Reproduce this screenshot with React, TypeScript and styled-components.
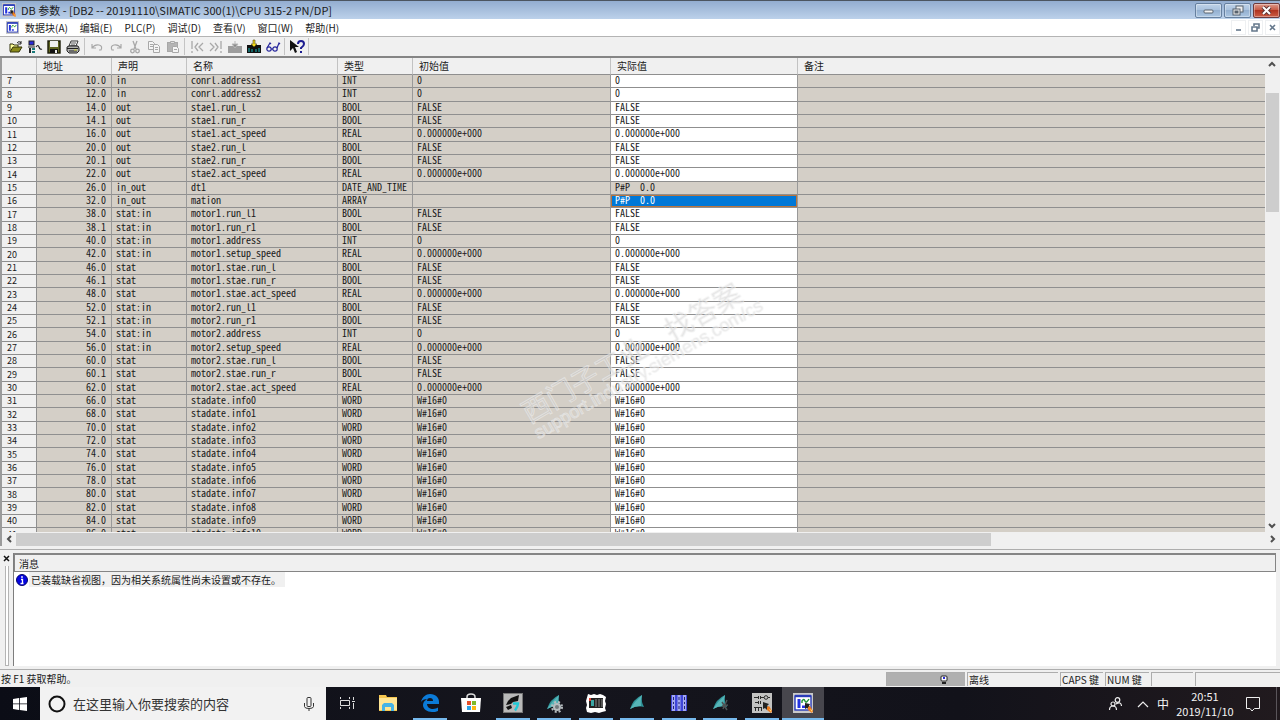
import React from "react";
import styled, { createGlobalStyle } from "styled-components";

const uiFont = `"Noto Sans CJK SC", "Noto Sans", sans-serif`;
const gridFont = `"Noto Sans Mono CJK SC", "Liberation Mono", "Noto Sans CJK SC", monospace`;

const GlobalStyle = createGlobalStyle`
  * { box-sizing: border-box; }
  body { margin: 0; background: #f0f0f0; color: #1a1a1a; font: 10px/14px ${uiFont}; }
  button { padding: 0; border: 0; background: none; color: inherit; font: inherit; }
  svg { display: block; }
`;

const Window = styled.div`
  display: flex;
  flex-direction: column;
  height: 100vh;
  overflow: hidden;
`;

const TitleBar = styled.header`
  display: flex;
  align-items: center;
  height: 19px;
  flex: none;
  padding: 0 0 0 2px;
  border-top: 1px solid #4c5560;
  background: linear-gradient(#93add0, #bcd1ea);
`;

const Title = styled.h1`
  flex: 1;
  margin: 0 0 0 5px;
  font-size: 11px;
  font-weight: 400;
  line-height: 16px;
  white-space: nowrap;
`;

const WindowButtons = styled.div`
  display: flex;
  align-items: center;
  gap: 2px;
`;

const FrameButton = styled.button<{ $close?: boolean }>`
  display: grid;
  place-items: center;
  width: 27px;
  height: 15px;
  border: 1px solid ${(p) => (p.$close ? "#6d3a3c" : "#66809f")};
  border-radius: 2px;
  background: ${(p) =>
    p.$close
      ? "linear-gradient(#dc9a8c, #c75a45 45%, #b03420 50%, #cc5d45)"
      : "linear-gradient(#bfd2e8, #a9c2de 45%, #94b0d0 50%, #abc6e2)"};
  box-shadow: inset 0 0 0 1px rgba(255, 255, 255, 0.35);
`;

const MenuBar = styled.nav`
  display: flex;
  align-items: center;
  height: 18px;
  flex: none;
  padding-left: 6px;
  border-bottom: 1px solid #b4b4b4;
  background: #fff;
`;

const MenuList = styled.div`
  display: flex;
  flex: 1;
  gap: 12px;
  margin-left: 6px;
`;

const MenuButton = styled.button`
  line-height: 14px;
  white-space: nowrap;
`;

const MdiButtons = styled.div`
  display: flex;
  gap: 2px;
`;

const MdiButton = styled.button`
  display: grid;
  place-items: center;
  width: 15px;
  height: 15px;
  border: 1px solid #eef0f2;
`;

const ToolBar = styled.div`
  display: flex;
  align-items: center;
  height: 21px;
  flex: none;
  padding-left: 6px;
  border-bottom: 2px solid #858585;
  background: #f0f0f0;
`;

const ToolButton = styled.button`
  display: grid;
  place-items: center;
  width: 19px;
  height: 18px;
`;

const Separator = styled.span`
  width: 1px;
  height: 17px;
  margin: 0 2px;
  background: #c4c4c4;
`;

const GridPane = styled.main`
  position: relative;
  display: grid;
  grid-template: minmax(0, 1fr) 14px / minmax(0, 1fr) 15px;
  flex: 1;
  min-height: 0;
  border-left: 2px solid #9b9b9b;
`;

const TableView = styled.div`
  min-height: 0;
  overflow: hidden;
  background: #d4cfc7;
`;

const Table = styled.table`
  width: 100%;
  table-layout: fixed;
  border-collapse: separate;
  border-spacing: 0;
`;

const HeadCell = styled.th`
  height: 17px;
  padding: 0 0 0 6px;
  border-right: 1px solid #c2c2c2;
  border-bottom: 1px solid #8f8f8f;
  background: #f0f0f0;
  font-weight: 400;
  line-height: 16px;
  text-align: left;

  &:last-child { border-right: 0; }
`;

const Row = styled.tr`
  height: 13px;

  &:nth-child(3n + 2) { height: 14px; }
`;

const RowNumber = styled.th`
  padding: 0 0 0 5px;
  border-right: 1px solid #8f8f8f;
  border-bottom: 1px solid #8f8f8f;
  background: #f0f0f0;
  font-size: 9px;
  font-weight: 400;
  line-height: 12px;
  text-align: left;
  vertical-align: bottom;
`;

const Cell = styled.td<{ $tone?: "plain" | "edit" | "active"; $right?: boolean }>`
  padding: 0 5px 0 4px;
  border-right: 1px solid #999;
  border-bottom: 1px solid #8f8f8f;
  background: ${(p) => (p.$tone === "active" ? "#0078d7" : p.$tone === "edit" ? "#fff" : "#d4cfc7")};
  color: ${(p) => (p.$tone === "active" ? "#fff" : "#1a1a1a")};
  box-shadow: ${(p) => (p.$tone === "active" ? "inset 0 0 0 1px #b8753f" : "none")};
  font-family: ${gridFont};
  line-height: 10px;
  text-align: ${(p) => (p.$right ? "right" : "left")};
  vertical-align: top;
  white-space: pre;

  &:last-child { border-right: 0; }
`;

const VerticalBar = styled.div`
  display: flex;
  flex-direction: column;
  align-items: stretch;
  padding: 0 1px;
  background: #f0f0f0;
`;

const HorizontalBar = styled.div`
  display: flex;
  grid-column: 1 / -1;
  padding: 1px 1px 0;
  background: #f0f0f0;
`;

const ScrollButton = styled.button`
  display: grid;
  place-items: center;
  flex: none;
  width: 13px;
  height: 13px;
`;

const Track = styled.div<{ $vertical?: boolean }>`
  display: flex;
  flex: 1;
  flex-direction: ${(p) => (p.$vertical ? "column" : "row")};
  padding: ${(p) => (p.$vertical ? "22px 0 0" : "0")};
`;

const Thumb = styled.div<{ $share: number }>`
  flex: 0 0 ${(p) => p.$share}%;
  background: #cdcdcd;
`;

const Watermark = styled.div`
  position: absolute;
  left: 50%;
  top: 61%;
  translate: -50% -50%;
  rotate: -30deg;
  color: rgba(255, 255, 255, 0.2);
  -webkit-text-stroke: 1px rgba(246, 246, 246, 0.5);
  text-shadow: 0 0 1px rgba(170, 170, 170, 0.4);
  white-space: pre;
  pointer-events: none;
`;

const WatermarkName = styled.div`
  display: flex;
  gap: 24px;
  font-size: 28px;
  line-height: 30px;
`;

const WatermarkUrl = styled.div`
  font: 18px/18px "Liberation Sans", sans-serif;
`;

const MessagePane = styled.section`
  display: flex;
  height: 121px;
  flex: none;
  margin-top: 3px;
  padding: 3px 4px 3px 0;
  border-top: 1px solid #adadad;
  border-bottom: 1px solid #adadad;
`;

const DockHandle = styled.div`
  display: flex;
  flex-direction: column;
  align-items: center;
  width: 13px;
  gap: 4px;
  padding-top: 2px;
`;

const Grip = styled.div`
  flex: 1;
  width: 4px;
  border: 1px solid #b4b4b4;
  border-top: 0;
  background: #fff;
`;

const MessageBox = styled.div`
  flex: 1;
  border-left: 1px solid #7d7d7d;
  background: #fff;
`;

const MessageHead = styled.h2`
  height: 19px;
  margin: 0;
  padding-left: 4px;
  border: 1px solid #858585;
  border-top-width: 2px;
  background: #f0f0f0;
  font-size: 10px;
  font-weight: 400;
  line-height: 17px;
`;

const MessageRow = styled.p`
  display: flex;
  align-items: center;
  gap: 1px;
  margin: 0;
  padding-left: 2px;
`;

const MessageText = styled.span`
  padding: 0 4px 0 2px;
  background: #f0f0f0;
  line-height: 15px;
`;

const StatusBar = styled.footer`
  display: flex;
  height: 17px;
  flex: none;
  gap: 2px;
  padding: 2px 0 1px 1px;
  line-height: 14px;
`;

const StatusHint = styled.span`
  flex: 1;
`;

const StatusCell = styled.span<{ $width: number; $busy?: boolean }>`
  display: flex;
  align-items: center;
  width: ${(p) => p.$width}px;
  padding-left: ${(p) => (p.$busy ? 52 : 1)}px;
  border: solid #adadad;
  border-width: 1px 0 0 1px;
  background: ${(p) => (p.$busy ? "#b0b0b0" : "#f0f0f0")};
  white-space: nowrap;
`;

const TaskBar = styled.div`
  display: flex;
  height: 33px;
  flex: none;
  background: linear-gradient(90deg, #0b0d16, #15151d 40%, #12121a 75%, #211a1e);
  color: #f4f4f4;
`;

const StartButton = styled.button`
  display: grid;
  place-items: center;
  width: 40px;
`;

const SearchBox = styled.label`
  display: flex;
  align-items: center;
  width: 286px;
  padding: 0 10px 0 8px;
  background: #f2f2f2;
`;

const SearchInput = styled.input`
  flex: 1;
  min-width: 0;
  padding: 0 0 0 7px;
  border: 0;
  outline: 0;
  background: none;
  font: 13px/20px ${uiFont};

  &::placeholder { color: #333; opacity: 1; }
`;

const TaskList = styled.div`
  display: flex;
  flex: 1;
`;

const TaskButton = styled.button<{ $open?: boolean; $active?: boolean }>`
  display: flex;
  flex-direction: column;
  align-items: center;
  justify-content: flex-end;
  width: 41px;
  gap: 5px;
  background: ${(p) => (p.$active ? "#47464d" : "none")};

  &:nth-child(even) { width: 42px; }

  &::after {
    content: "";
    width: ${(p) => (p.$active ? "100%" : "34px")};
    height: 2px;
    background: ${(p) => (p.$open ? "#76b9ed" : "transparent")};
  }
`;

const Tray = styled.div`
  display: flex;
  align-items: center;
  gap: 2px;
  padding-right: 3px;
`;

const Clock = styled.time`
  width: 68px;
  padding-right: 2px;
  font-size: 11px;
  line-height: 15px;
  text-align: center;
`;

const TrayButton = styled.button<{ $width: number }>`
  display: grid;
  place-items: center;
  width: ${(p) => p.$width}px;
  height: 33px;
  font-size: 12px;
`;

const DesktopEdge = styled.span`
  width: 1px;
  height: 33px;
  margin-left: 10px;
  background: #5a555a;
`;

const AppIcon = ({ size = 14, pointer = true }: { size?: number; pointer?: boolean }) => (
  <svg width={size} height={size} viewBox="0 0 20 20">
    <rect width="20" height="20" fill="#c9c9c9" />
    <rect x="2" y="3" width="16" height="14" fill="#fff" stroke="#2a3cb8" strokeWidth="1.4" />
    <path d="M2 3h16" stroke="#2a3cb8" strokeWidth="2.4" />
    <path d="M6 6v9M10.500 12.500v2.500" stroke="#2433e0" strokeWidth="3" />
    <path d="M9 10V8q2-3 3 0t4-2" fill="none" stroke="#1c9432" strokeWidth="1.4" />
    {pointer && (
      <>
        <path d="M12 10l5 1-1 2 2 2-2 2-2-2-2 1z" fill="#222" />
        <path d="M15 14l2-1 3 5-1 2-4-3z" fill="#ef7b1b" />
        <path d="M17 16l2 1v2z" fill="#ffe27a" />
      </>
    )}
  </svg>
);

const Tool = ({ children }: { children: React.ReactNode }) => (
  <svg width="16" height="16" viewBox="0 0 16 16" fill="none">
    {children}
  </svg>
);

const dim = "#a8a8a8";

const toolGroups: { label: string; icon: React.ReactNode }[][] = [
  [
    {
      label: "打开",
      icon: (
        <>
          <path d="M2 12V5h3l1 1h4v2" fill="#ffff9a" stroke="#33330a" />
          <path d="M2 13l3-5h9l-3 5z" fill="#8b8b1a" stroke="#33330a" />
          <path d="M9 4q2-3 4 0M13 2v3h-3" stroke="#222" />
        </>
      ),
    },
    {
      label: "在线",
      icon: (
        <>
          <rect x="2" y="2" width="5" height="4" fill="#2a2ad8" stroke="#222" />
          <path d="M1 8h7" stroke="#222" />
          <rect x="2" y="9" width="2" height="5" fill="#222" />
          <rect x="5" y="9" width="3" height="2" fill="#1a7a7a" />
          <rect x="5" y="12" width="3" height="2" fill="#1a7a7a" />
          <path d="M9 8q2-3 3 0t3 2" stroke="#222" strokeWidth="1.2" />
        </>
      ),
    },
    {
      label: "保存",
      icon: (
        <>
          <rect x="2" y="2" width="12" height="12" fill="#5f6420" stroke="#1c1c08" strokeWidth="1.4" />
          <rect x="4" y="2" width="8" height="6" fill="#efefef" />
          <rect x="4" y="10" width="8" height="4" fill="#111" />
          <rect x="9" y="11" width="2" height="3" fill="#eee" />
        </>
      ),
    },
    {
      label: "打印",
      icon: (
        <>
          <path d="M4 7l2-5h7l-2 5z" fill="#fff" stroke="#333" />
          <path d="M6 4h5M6 6h4" stroke="#555" />
          <path d="M2 8l2-1h9l1 2v3l-2 2H4l-2-2z" fill="#b0b0b0" stroke="#222" />
          <path d="M2 9.500h11M4 12h8" stroke="#222" />
          <path d="M9 11h3" stroke="#d8d83a" />
        </>
      ),
    },
  ],
  [
    { label: "撤消", icon: <path d="M3 5v4h4M3 9q3-4 7-3t2 5h-2" stroke={dim} strokeWidth="1.2" /> },
    { label: "重做", icon: <path d="M13 5v4H9M13 9q-3-4-7-3t-2 5h2" stroke={dim} strokeWidth="1.2" /> },
    {
      label: "剪切",
      icon: (
        <>
          <path d="M6 2l3 8M10 2L7 10" stroke={dim} strokeWidth="1.3" />
          <circle cx="5.500" cy="12" r="1.800" stroke={dim} strokeWidth="1.3" />
          <circle cx="10.500" cy="12" r="1.800" stroke={dim} strokeWidth="1.3" />
        </>
      ),
    },
    {
      label: "复制",
      icon: (
        <g stroke={dim}>
          <path d="M2.500 2.500h4l2 2v6h-6z" fill="#f5f5f5" />
          <path d="M4 5.500h3M4 7.500h3" />
          <path d="M7.500 5.500h4l2 2v6h-6z" fill="#f5f5f5" />
          <path d="M9 8.500h3M9 10.500h3" />
        </g>
      ),
    },
    {
      label: "粘贴",
      icon: (
        <g stroke={dim}>
          <rect x="2.500" y="3.500" width="10" height="9" fill="#b4b4b4" />
          <path d="M5.500 2.500h4v2h-4z" fill="#ddd" />
          <path d="M7.500 7.500h4l2 2v4h-6z" fill="#f5f5f5" />
          <path d="M9 10.500h3" />
        </g>
      ),
    },
  ],
  [
    { label: "上一个错误", icon: <path d="M3 2v8M3 12v2M9 4L6 8l3 4M14 4l-4 4 4 4" stroke={dim} strokeWidth="1.3" /> },
    { label: "下一个错误", icon: <path d="M13 2v8M13 12v2M2 4l4 4-4 4M7 4l3 4-3 4" stroke={dim} strokeWidth="1.3" /> },
    {
      label: "下载",
      icon: (
        <>
          <path d="M1 7h14v7H1z" fill="#9d9d9d" />
          <path d="M8 2v3M5 5h6L8 9z" fill="#8a8a8a" stroke="#b8b8b8" />
        </>
      ),
    },
    {
      label: "下载到 CPU",
      icon: (
        <>
          <path d="M1 6h14v8H1z" fill="#111" />
          <path d="M3 9v4M6 10v3M10 10v3M13 9v4" stroke="#16898b" strokeWidth="1.4" />
          <path d="M7 1h2v4h2L8 8 5 5h2z" fill="#f5dc22" stroke="#4d4508" strokeWidth=".6" />
        </>
      ),
    },
    {
      label: "监视",
      icon: (
        <g stroke="#26269c" strokeWidth="1.2">
          <circle cx="4" cy="10" r="2.200" />
          <circle cx="10" cy="10" r="2.200" />
          <path d="M2 9l3-5 1 1M12 9l2-5 1 1M6 10h2" />
        </g>
      ),
    },
  ],
  [
    {
      label: "帮助",
      icon: (
        <>
          <path d="M1 1v11l3-3 2 5 2-1-2-5h4z" fill="#111" />
          <path d="M9 5q0-3 3-3t3 3q0 2-3 4v1M12 12v2" stroke="#1c1c90" strokeWidth="2" />
        </>
      ),
    },
  ],
];

const menus = ["数据块(A)", "编辑(E)", "PLC(P)", "调试(D)", "查看(V)", "窗口(W)", "帮助(H)"];
const columns = [
  { label: "", width: 35 },
  { label: "地址", width: 75 },
  { label: "声明", width: 75 },
  { label: "名称", width: 151 },
  { label: "类型", width: 75 },
  { label: "初始值", width: 198 },
  { label: "实际值", width: 187 },
  { label: "备注", width: 0 },
];

const zeroByType: Record<string, string> = {
  INT: "0",
  BOOL: "FALSE",
  REAL: "0.000000e+000",
  WORD: "W#16#0",
};

const variables: [string, string, string, string][] = [
  ["10.0", "in", "conrl.address1", "INT"],
  ["12.0", "in", "conrl.address2", "INT"],
  ["14.0", "out", "stae1.run_l", "BOOL"],
  ["14.1", "out", "stae1.run_r", "BOOL"],
  ["16.0", "out", "stae1.act_speed", "REAL"],
  ["20.0", "out", "stae2.run_l", "BOOL"],
  ["20.1", "out", "stae2.run_r", "BOOL"],
  ["22.0", "out", "stae2.act_speed", "REAL"],
  ["26.0", "in_out", "dt1", "DATE_AND_TIME"],
  ["32.0", "in_out", "mation", "ARRAY"],
  ["38.0", "stat:in", "motor1.run_l1", "BOOL"],
  ["38.1", "stat:in", "motor1.run_r1", "BOOL"],
  ["40.0", "stat:in", "motor1.address", "INT"],
  ["42.0", "stat:in", "motor1.setup_speed", "REAL"],
  ["46.0", "stat", "motor1.stae.run_l", "BOOL"],
  ["46.1", "stat", "motor1.stae.run_r", "BOOL"],
  ["48.0", "stat", "motor1.stae.act_speed", "REAL"],
  ["52.0", "stat:in", "motor2.run_l1", "BOOL"],
  ["52.1", "stat:in", "motor2.run_r1", "BOOL"],
  ["54.0", "stat:in", "motor2.address", "INT"],
  ["56.0", "stat:in", "motor2.setup_speed", "REAL"],
  ["60.0", "stat", "motor2.stae.run_l", "BOOL"],
  ["60.1", "stat", "motor2.stae.run_r", "BOOL"],
  ["62.0", "stat", "motor2.stae.act_speed", "REAL"],
  ...Array.from({ length: 11 }, (_, i): [string, string, string, string] => [
    `${66 + i * 2}.0`,
    "stat",
    `stadate.info${i}`,
    "WORD",
  ]),
];

const Chevron = ({ d }: { d: string }) => (
  <svg width="9" height="9" viewBox="0 0 9 9" fill="none" stroke="#505050" strokeWidth="2">
    <path d={d} />
  </svg>
);

const Sail = ({ children }: { children?: React.ReactNode }) => (
  <svg width="20" height="20" viewBox="0 0 20 20">
    <path d="M3 16Q6 6 15 2q-1 7 2 12-8-2-14 2z" fill="#2f9298" />
    <path d="M3 16Q8 8 15 2q-2 6-1 11-6 0-11 3z" fill="#56b5b8" />
    {children}
  </svg>
);

const tasks: { label: string; open?: boolean; active?: boolean; icon: React.ReactNode }[] = [
  {
    label: "任务视图",
    icon: (
      <svg width="20" height="20" viewBox="0 0 20 20" fill="none" stroke="#dcdcdc">
        <path d="M3.500 4v2M12.500 4v2M3.500 14v2M12.500 14v2M16.500 4v3M16.500 10v6" />
        <path d="M3.500 7.500h9v5h-9zM15 8.500h3" />
      </svg>
    ),
  },
  {
    label: "文件资源管理器",
    icon: (
      <svg width="20" height="20" viewBox="0 0 20 20">
        <path d="M1 2h7l1 2h10v14H1z" fill="#f5c64f" />
        <path d="M1 5h18v12H1z" fill="#ffe594" />
        <path d="M4 18v-6l2-2h8l2 2v6h-3v-4H7v4z" fill="#45b3e6" />
      </svg>
    ),
  },
  {
    label: "Edge",
    open: true,
    icon: (
      <svg width="20" height="20" viewBox="0 0 20 20">
        <path
          d="M1 9C2 4 6 1 10 1c6 0 9 4 9 8v2H7c0 3 3 5 6 5 2 0 4-1 5-1.500v3.500c-2 1-4 1-6 1-5 0-9-3-9-7 0-3 2-5 5-6-4 0-6 1-7 3zm6-1h6c0-2-1-3-3-3s-3 1-3 3z"
          fill="#0b7bd8"
        />
      </svg>
    ),
  },
  {
    label: "应用商店",
    icon: (
      <svg width="20" height="20" viewBox="0 0 20 20">
        <path d="M6 6V4q0-3 4-3t4 3v2" fill="none" stroke="#ddd" strokeWidth="1.500" />
        <path d="M0 5h20l-1 14H1z" fill="#fff" />
        <path d="M6 8h4v4H6z" fill="#e8502a" />
        <path d="M11 8h4v4h-4z" fill="#80ba27" />
        <path d="M6 13h4v4H6z" fill="#2ca4e8" />
        <path d="M11 13h4v4h-4z" fill="#fdb913" />
      </svg>
    ),
  },
  {
    label: "SIMATIC Manager",
    open: true,
    icon: (
      <svg width="20" height="20" viewBox="0 0 20 20">
        <rect width="20" height="20" fill="#777" />
        <rect x="1" y="1" width="18" height="18" fill="#b9b9b9" />
        <path d="M8 5l8-3-1 6-5 1-2 2-5 1 2-4zM3 14l5-2 1 3-4 2z" fill="#111" />
        <path d="M10 10.500h5q0 3-3 7" fill="none" stroke="#20c9d6" strokeWidth="2.400" />
      </svg>
    ),
  },
  {
    label: "仿真设置",
    open: true,
    icon: (
      <Sail>
        <circle cx="13" cy="14" r="3" fill="#70787c" stroke="#b6bcbf" strokeWidth="2" />
        <circle cx="13" cy="14" r="5" fill="none" stroke="#b6bcbf" strokeWidth="2" strokeDasharray="2 2" />
      </Sail>
    ),
  },
  {
    label: "硬件组态",
    open: true,
    icon: (
      <svg width="20" height="20" viewBox="0 0 20 20">
        <path d="M2 1l3 1 3-1 3 1 3-1 3 1 3 2-1 4 1 3-1 4 1 3-4 1-3 1-4-1-4 1-4-1-1-4 1-3-1-4z" fill="#fff" />
        <rect x="3" y="5" width="14" height="10" fill="#222" />
        <rect x="5" y="7" width="3" height="6" fill="#3ba7a5" />
        <path d="M10 6v8M13 6v8M16 6v8" stroke="#888" />
        <path d="M4 5v3" stroke="#e34234" strokeWidth="2" />
      </svg>
    ),
  },
  { label: "仿真", open: true, icon: <Sail /> },
  {
    label: "机架",
    open: true,
    icon: (
      <svg width="20" height="20" viewBox="0 0 20 20">
        <rect x="2" y="2" width="16" height="16" fill="#3f46d9" />
        <path d="M4.500 2v16M10 2v16M15.500 2v16" stroke="#a4a9ee" strokeWidth="3" />
        <path d="M4.500 4v3M4.500 9v2M4.500 13v3M10 4v3M10 9v2M10 13v3M15.500 4v3M15.500 9v2M15.500 13v3" stroke="#22257a" />
      </svg>
    ),
  },
  {
    label: "诊断",
    open: true,
    icon: (
      <Sail>
        <path d="M12 9l5 8M17 7l-4 9M18 12l-6 1" stroke="#4c5254" strokeWidth="1.500" />
      </Sail>
    ),
  },
  {
    label: "程序编辑器",
    open: true,
    icon: (
      <svg width="20" height="20" viewBox="0 0 20 20">
        <rect width="20" height="20" fill="#c2c2c2" />
        <path
          d="M2 4.500h4M6.500 3v3M8.500 3v3M9 4.500h3M16 4.500h2M3 9.500h3M6.500 8v3M8.500 8v3M3.500 14v4M6.500 14v4M9.500 14v4M2 14.500h8"
          stroke="#2a2a2a"
        />
        <circle cx="14" cy="4.500" r="1.800" fill="none" stroke="#2a2a2a" />
        <path d="M11 9l6 2-2 2 2 2-2 2-2-2-2 1z" fill="#222" />
        <path d="M15 14l2-1 3 5-1 2-4-3z" fill="#ef7b1b" />
        <path d="M17 16l2 1v2z" fill="#ffe27a" />
      </svg>
    ),
  },
  { label: "DB 参数", open: true, active: true, icon: <AppIcon size={20} /> },
];

export default function App() {
  return (
    <Window>
      <GlobalStyle />
      <TitleBar>
        <AppIcon />
        <Title>DB 参数 - [DB2 -- 20191110\SIMATIC 300(1)\CPU 315-2 PN/DP]</Title>
        <WindowButtons>
          <FrameButton aria-label="最小化">
            <svg width="11" height="9" viewBox="0 0 11 9">
              <rect x="1" y="4" width="9" height="3" rx="1" fill="#f2f2f2" stroke="#59636e" />
            </svg>
          </FrameButton>
          <FrameButton aria-label="还原">
            <svg width="12" height="11" viewBox="0 0 12 11" fill="#eee" stroke="#59636e">
              <rect x="4" y="1" width="7" height="6" />
              <rect x="1" y="4" width="7" height="6" />
              <rect x="3" y="6" width="3" height="2" fill="#59636e" />
            </svg>
          </FrameButton>
          <FrameButton $close aria-label="关闭">
            <svg width="11" height="9" viewBox="0 0 11 9">
              <path d="M2 1l7 7M9 1L2 8" stroke="#5e3535" strokeWidth="4" />
              <path d="M2 1l7 7M9 1L2 8" stroke="#fff" strokeWidth="2" />
            </svg>
          </FrameButton>
        </WindowButtons>
      </TitleBar>

      <MenuBar>
        <AppIcon size={13} pointer={false} />
        <MenuList>
          {menus.map((m) => (
            <MenuButton key={m}>{m}</MenuButton>
          ))}
        </MenuList>
        <MdiButtons>
          {[
            ["最小化文档", "M2 7h5"],
            ["还原文档", "M3 3V1h5v4H6M1 4h5v4H1z"],
            ["关闭文档", "M2 2l5 5M7 2L2 7"],
          ].map(([label, d]) => (
            <MdiButton key={label} aria-label={label}>
              <svg width="9" height="9" viewBox="0 0 9 9" fill="none" stroke="#65788c" strokeWidth="1.6">
                <path d={d} />
              </svg>
            </MdiButton>
          ))}
        </MdiButtons>
      </MenuBar>

      <ToolBar>
        {toolGroups.map((group, i) => (
          <React.Fragment key={i}>
            {group.map((t) => (
              <ToolButton key={t.label} aria-label={t.label}>
                <Tool>{t.icon}</Tool>
              </ToolButton>
            ))}
            <Separator />
          </React.Fragment>
        ))}
      </ToolBar>

      <GridPane>
        <TableView>
          <Table>
            <colgroup>
              {columns.map((c, i) => (
                <col key={i} width={c.width || undefined} />
              ))}
            </colgroup>
            <thead>
              <tr>
                {columns.map((c, i) => (
                  <HeadCell key={i}>{c.label}</HeadCell>
                ))}
              </tr>
            </thead>
            <tbody>
              {variables.map(([address, section, name, type], i) => {
                const initial = zeroByType[type] ?? "";
                const pointer = !initial;
                const tone = type === "ARRAY" ? "active" : pointer ? "plain" : "edit";
                return (
                  <Row key={address}>
                    <RowNumber scope="row">{i + 7}</RowNumber>
                    <Cell $right>{address}</Cell>
                    <Cell>{section}</Cell>
                    <Cell>{name}</Cell>
                    <Cell>{type}</Cell>
                    <Cell>{initial}</Cell>
                    <Cell $tone={tone}>{pointer ? "P#P  0.0" : initial}</Cell>
                    <Cell />
                  </Row>
                );
              })}
            </tbody>
          </Table>
        </TableView>
        <VerticalBar>
          <ScrollButton aria-label="向上滚动">
            <Chevron d="M1 6l3-3 3 3" />
          </ScrollButton>
          <Track $vertical>
            <Thumb $share={28} />
          </Track>
          <ScrollButton aria-label="向下滚动">
            <Chevron d="M1 3l3 3 3-3" />
          </ScrollButton>
        </VerticalBar>
        <HorizontalBar>
          <ScrollButton aria-label="向左滚动">
            <Chevron d="M6 1L3 4l3 3" />
          </ScrollButton>
          <Track>
            <Thumb $share={78} />
          </Track>
          <ScrollButton aria-label="向右滚动">
            <Chevron d="M3 1l3 3-3 3" />
          </ScrollButton>
        </HorizontalBar>
        <Watermark aria-hidden="true">
          <WatermarkName>
            <span>西门子工业</span>
            <span>找答案</span>
          </WatermarkName>
          <WatermarkUrl>support.industry.siemens.com/cs</WatermarkUrl>
        </Watermark>
      </GridPane>

      <MessagePane>
        <DockHandle>
          <button aria-label="关闭消息">
            <svg width="7" height="7" viewBox="0 0 7 7">
              <path d="M1 1l5 5M6 1L1 6" stroke="#111" strokeWidth="1.500" />
            </svg>
          </button>
          <Grip />
        </DockHandle>
        <MessageBox>
          <MessageHead>消息</MessageHead>
          <MessageRow>
            <svg width="12" height="12" viewBox="0 0 12 12">
              <circle cx="6" cy="6" r="5.500" fill="#0505e0" stroke="#05056e" />
              <path d="M6 2v2M5 5.500h1.500V9M4.500 9.500h3" fill="none" stroke="#fff" strokeWidth="1.300" />
            </svg>
            <MessageText>已装载缺省视图，因为相关系统属性尚未设置或不存在。</MessageText>
          </MessageRow>
        </MessageBox>
      </MessagePane>

      <StatusBar>
        <StatusHint>按 F1 获取帮助。</StatusHint>
        <StatusCell $width={79} $busy>
          <svg width="10" height="10" viewBox="0 0 10 10">
            <rect x="2" y="1" width="6" height="5" rx="1" fill="#fff" stroke="#222" />
            <rect x="4" y="2" width="2" height="2" fill="#2d2dd6" />
            <path d="M3 8h4" stroke="#222" strokeWidth="2" />
          </svg>
        </StatusCell>
        <StatusCell $width={91}>离线</StatusCell>
        <StatusCell $width={43}>CAPS 键</StatusCell>
        <StatusCell $width={44}>NUM 键</StatusCell>
        <StatusCell $width={42} />
        <StatusCell $width={85} />
      </StatusBar>

      <TaskBar>
        <StartButton aria-label="开始">
          <svg width="14" height="14" viewBox="0 0 14 14" fill="#fff">
            <path d="M0 2l6-1v5.500H0zM6.800 1L14 0v6.500H6.800zM0 7.300h6V13l-6-1zM6.800 7.300H14V14l-7.200-1z" />
          </svg>
        </StartButton>
        <SearchBox>
          <svg width="18" height="18" viewBox="0 0 18 18">
            <circle cx="9" cy="9" r="7.500" fill="none" stroke="#111" strokeWidth="2" />
          </svg>
          <SearchInput aria-label="搜索" placeholder="在这里输入你要搜索的内容" />
          <svg width="14" height="16" viewBox="0 0 14 16" fill="none" stroke="#333">
            <rect x="5" y="1.500" width="4" height="9" rx="1" />
            <path d="M2.500 7v3.500q0 2 4.500 2t4.500-2V7M7 12.500V15" />
          </svg>
        </SearchBox>
        <TaskList>
          {tasks.map((t) => (
            <TaskButton key={t.label} $open={t.open} $active={t.active} aria-label={t.label}>
              {t.icon}
            </TaskButton>
          ))}
        </TaskList>
        <Tray>
          <TrayButton $width={30} aria-label="人脉">
            <svg width="14" height="14" viewBox="0 0 14 14" fill="none" stroke="#eee" strokeWidth="1.200">
              <circle cx="9.500" cy="3" r="2.300" />
              <circle cx="5" cy="7" r="2" />
              <path d="M1.500 13q0-4 3.500-4t3.500 4M8 7q5-3 5.500 2" />
            </svg>
          </TrayButton>
          <TrayButton $width={22} aria-label="显示隐藏的图标">
            <svg width="12" height="8" viewBox="0 0 12 8" fill="none" stroke="#eee" strokeWidth="1.200">
              <path d="M1 7l5-5 5 5" />
            </svg>
          </TrayButton>
          <TrayButton $width={14} aria-label="输入法">中</TrayButton>
          <Clock>
            20:51
            <br />
            2019/11/10
          </Clock>
          <TrayButton $width={22} aria-label="通知">
            <svg width="16" height="16" viewBox="0 0 16 16" fill="none" stroke="#eee">
              <path d="M1.500 1.500h13v11h-5L7 15l-2-2.500H1.500z" />
            </svg>
          </TrayButton>
          <DesktopEdge />
        </Tray>
      </TaskBar>
    </Window>
  );
}
